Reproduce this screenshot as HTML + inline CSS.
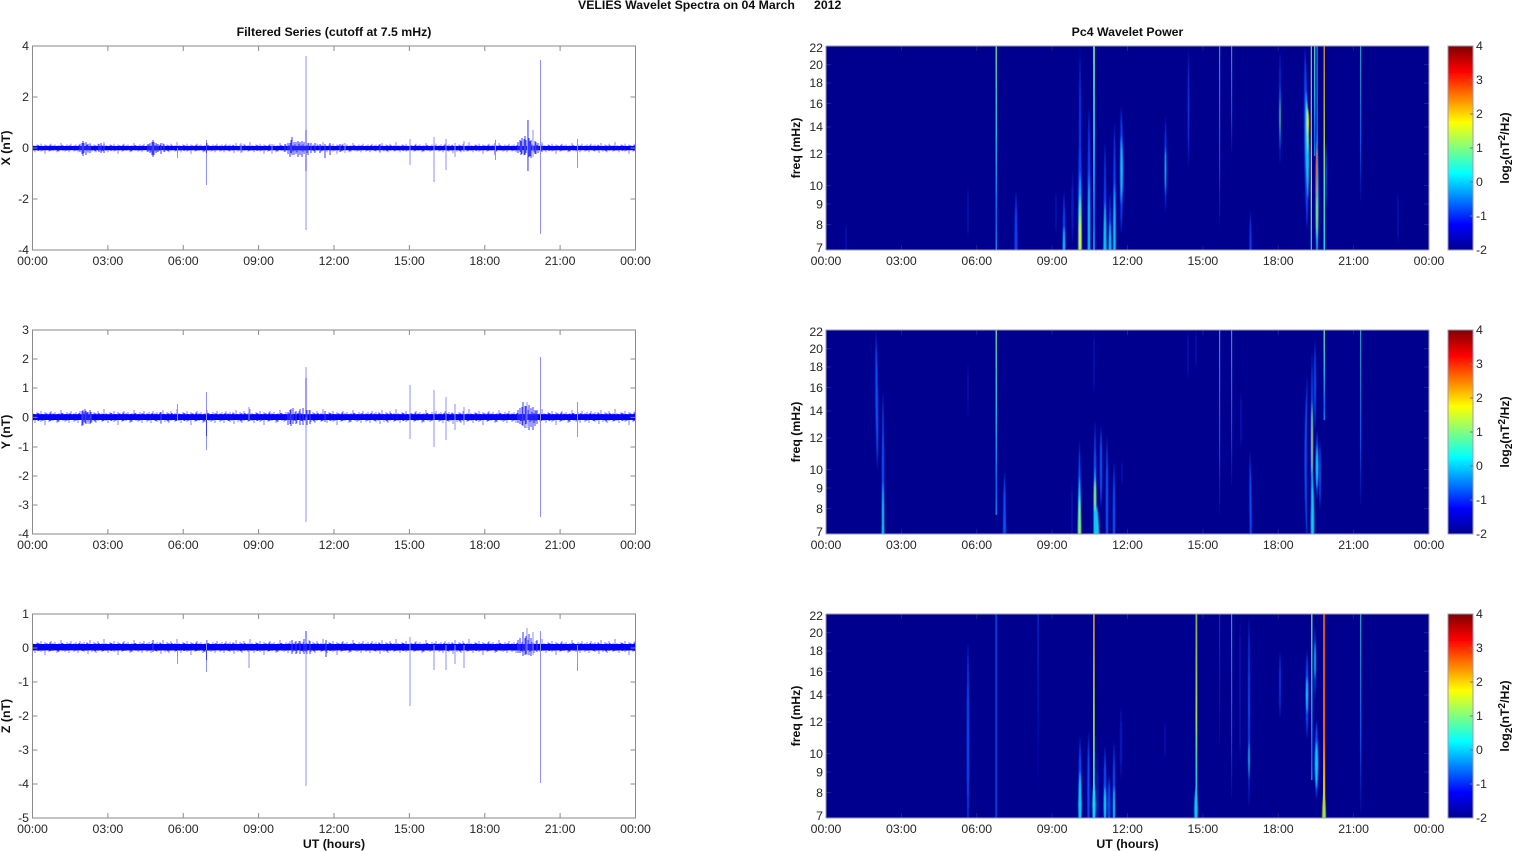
<!DOCTYPE html>
<html lang="en"><head><meta charset="utf-8"><title>VELIES Wavelet Spectra</title>
<style>
html,body{margin:0;padding:0;background:#fff;width:1515px;height:851px;overflow:hidden}
svg{display:block}
text{font-family:"Liberation Sans",sans-serif;font-size:12.3px;fill:#262626}
.b{font-weight:bold;fill:#111}
.m{text-anchor:middle}
.e{text-anchor:end}
</style></head><body>
<svg width="1515" height="851" viewBox="0 0 1515 851" xmlns="http://www.w3.org/2000/svg">
<defs>
<linearGradient id="jet" x1="0" y1="1" x2="0" y2="0">
<stop offset="0" stop-color="#00008f"/><stop offset=".125" stop-color="#0000ff"/><stop offset=".375" stop-color="#00ffff"/><stop offset=".625" stop-color="#ffff00"/><stop offset=".875" stop-color="#ff0000"/><stop offset="1" stop-color="#800000"/>
</linearGradient>
<linearGradient id="f1" x1="0" y1="0" x2="0" y2="1"><stop offset="0" stop-color="#5fc8a0"/><stop offset=".45" stop-color="#20b0e0"/><stop offset=".85" stop-color="#0a60f0"/><stop offset="1" stop-color="#1080f0"/></linearGradient>
<linearGradient id="f2" x1="0" y1="0" x2="0" y2="1"><stop offset="0" stop-color="#2b9bc0"/><stop offset=".6" stop-color="#0a50e0"/><stop offset="1" stop-color="#000090"/></linearGradient>
<linearGradient id="f3" x1="0" y1="0" x2="0" y2="1"><stop offset="0" stop-color="#0a30d0"/><stop offset="1" stop-color="#000090"/></linearGradient>
<linearGradient id="f4" x1="0" y1="0" x2="0" y2="1"><stop offset="0" stop-color="#c08040"/><stop offset=".5" stop-color="#a8d040"/><stop offset=".8" stop-color="#30e0c0"/><stop offset="1" stop-color="#10d0f0"/></linearGradient>
<linearGradient id="f5" x1="0" y1="0" x2="0" y2="1"><stop offset="0" stop-color="#d05030"/><stop offset=".6" stop-color="#f06010"/><stop offset=".85" stop-color="#f0c000"/><stop offset="1" stop-color="#80f060"/></linearGradient>
<linearGradient id="f6" x1="0" y1="0" x2="0" y2="1"><stop offset="0" stop-color="#90a060"/><stop offset=".5" stop-color="#a0e050"/><stop offset=".85" stop-color="#20c0e0"/><stop offset="1" stop-color="#10c0f0"/></linearGradient>
<linearGradient id="f7" x1="0" y1="0" x2="0" y2="1"><stop offset="0" stop-color="#60c8a8"/><stop offset=".4" stop-color="#d0a040"/><stop offset=".7" stop-color="#a0e050"/><stop offset="1" stop-color="#10c0e0"/></linearGradient>
<clipPath id="c1"><rect x="826" y="46" width="603" height="204"/></clipPath>
<clipPath id="c2"><rect x="826" y="330" width="603" height="204"/></clipPath>
<clipPath id="c3"><rect x="826" y="614" width="603" height="204"/></clipPath>
<filter id="s" x="-5%" y="-5%" width="110%" height="110%"><feGaussianBlur stdDeviation=".45"/></filter>
<filter id="t" x="-2%" y="-2%" width="104%" height="104%"><feGaussianBlur stdDeviation=".25"/></filter>
<pattern id="nz" patternUnits="userSpaceOnUse" x="0" y="-12" width="73" height="24">
<g transform="translate(0,12)" fill="none">
<path stroke="#8080ff" d="M1 -4V5M3 -5V4M5 -3V6M7 -6V3M9 -4V4M11 -5V5M13 -3V4M15 -4V7M17 -7V3M19 -3V5M21 -5V4M23 -4V6M25 -6V4M27 -3V3M29 -4V5M31 -8V4M33 -4V4M35 -3V6M37 -5V3M39 -4V4M41 -6V5M43 -3V4M45 -5V8M47 -4V3M49 -3V5M51 -6V4M53 -4V4M55 -5V3M57 -3V6M59 -4V5M61 -7V3M63 -4V4M65 -3V5M67 -5V4M69 -4V6M71 -6V3"/>
<path stroke="#2020ff" d="M2 -3V3.500M6 -4V3M10 -3V4M14 -4.500V3M18 -3V3M22 -3.500V4.500M26 -4V3M30 -3V4M34 -3V3M38 -4V4M42 -3V3.500M46 -3.500V3M50 -4.500V4M54 -3V3M58 -3V4.500M62 -4V3M66 -3V3.500M70 -3.500V3"/>
</g>
</pattern>
<path id="xt" d="M107.9 0v5M183.25 0v5M258.6 0v5M334 0v5M409.4 0v5M484.75 0v5M560.1 0v5M107.9 204v-5M183.25 204v-5M258.6 204v-5M334 204v-5M409.4 204v-5M484.75 204v-5M560.1 204v-5" fill="none" stroke="#8a8a8a"/>
<path id="xtr" d="M901.4 0v5M976.75 0v5M1052.1 0v5M1127.5 0v5M1202.9 0v5M1278.25 0v5M1353.6 0v5M901.4 204v-5M976.75 204v-5M1052.1 204v-5M1127.5 204v-5M1202.9 204v-5M1278.25 204v-5M1353.6 204v-5M826 18.6h5M826 37h5M826 57.5h5M826 81h5M826 108h5M826 139.5h5M826 158h5M826 178.5h5M1429 18.6h-5M1429 37h-5M1429 57.5h-5M1429 81h-5M1429 108h-5M1429 139.5h-5M1429 158h-5M1429 178.5h-5" fill="none" stroke="#20208f"/>
<path id="cbt" d="M1473 34h-3M1473 68h-3M1473 102h-3M1473 136h-3M1473 170h-3" fill="none" stroke="#777"/>
</defs>

<g filter="url(#t)">
<text class="b" x="578" y="9">VELIES Wavelet Spectra on 04 March</text>
<text class="b" x="814" y="9">2012</text>
<text class="b m" x="334" y="36">Filtered Series (cutoff at 7.5 mHz)</text>
<text class="b m" x="1127.5" y="36">Pc4 Wavelet Power</text>

<!-- LEFT 1 -->
<g transform="translate(0,148)"><rect x="33" y="-12" width="602" height="24" fill="url(#nz)" transform="scale(1,.72)"/><rect x="33" y="-2" width="602" height="4.2" fill="#0000ff"/></g>
<path d="M80 144V152M82 143V154M83 141V156M84 143V153M86 142V155M88 144V152M90 144V153M99 144V152M101 143V153M104 144V153M148 144V152M150 143V153M152 142V155M153 140V157M154 142V155M156 143V153M158 144V152M161 143V154M164 144V152M285 144V152M288 143V154M290 143V157M291 140V153M292 137V155M294 142V155M296 142V154M298 141V157M300 142V155M302 141V157M304 142V154M308 143V155M311 143V153M315 143V153M320 144V153M325 144V158M330 143V155M340 144V152M380 144V152M495 143V155M518 142V153M520 140V152M521 141V155M522 138V154M524 139V155M525 136V155M526 140V153M528 120V171M529 138V157M530 141V156M531 140V158M533 130V157M535 141V154M536 142V154M538 143V153M542 144V152" stroke="#3a3aff" fill="none"/>
<path d="M306 56V230M206.5 140V185M177.5 148V158M540.5 60V234M410 139V165M434 137V182M446 139V170M455 143V157M464 141V152M495.5 140V160M527.5 120V171M533 130V157M577.5 139V168M272 144V154M241 143V153M345 143V153" stroke="#8f8fff" fill="none"/>
<path d="M306 130V171M206.5 143V153" stroke="#3a3aff" fill="none"/>
<rect x="32.5" y="46" width="603" height="204" fill="none" stroke="#8a8a8a"/>
<use href="#xt" y="46"/>
<path d="M32.5 97h5M32.5 148h5M32.5 199h5M635.5 97h-5M635.5 148h-5M635.5 199h-5" stroke="#8a8a8a" fill="none"/>
<text class="e" x="29" y="50">4</text><text class="e" x="29" y="101">2</text><text class="e" x="29" y="152">0</text><text class="e" x="29" y="203">-2</text><text class="e" x="29" y="254">-4</text>
<text class="m" x="32.5" y="265">00:00</text><text class="m" x="107.9" y="265">03:00</text><text class="m" x="183.25" y="265">06:00</text><text class="m" x="258.6" y="265">09:00</text><text class="m" x="334" y="265">12:00</text><text class="m" x="409.4" y="265">15:00</text><text class="m" x="484.75" y="265">18:00</text><text class="m" x="560.1" y="265">21:00</text><text class="m" x="635.5" y="265">00:00</text>
<text class="b m" transform="translate(10,148) rotate(-90)">X (nT)</text>

<!-- LEFT 2 -->
<g transform="translate(0,417)"><rect x="33" y="-12" width="602" height="24" fill="url(#nz)"/><rect x="33" y="-2.8" width="602" height="5.8" fill="#0000ff"/></g>
<path d="M82 411V426M83 410V425M85 409V423M86 411V424M88 412V422M90 410V424M91 412V423M161 412V423M288 412V425M290 410V424M291 409V426M293 408V424M296 411V424M300 409V425M303 408V425M307 410V425M310 410V424M325 411V422M518 410V423M520 408V424M522 407V425M523 402V426M525 406V428M526 406V424M529 405V430M531 408V427M533 407V430M535 410V426M537 410V424" stroke="#3a3aff" fill="none"/>
<path d="M306 367V522M206.5 392V450M177.5 404V420M249 407V420M410 385V439M434 390V447M446 397V440M455 404V430M464 407V425M540.5 357V517M527 402V428M577.5 402V437" stroke="#8f8fff" fill="none"/>
<path d="M306 378V417M206.5 420V436" stroke="#3a3aff" fill="none"/>
<rect x="32.5" y="330" width="603" height="204" fill="none" stroke="#8a8a8a"/>
<use href="#xt" y="330"/>
<path d="M32.5 359h5M32.5 388h5M32.5 417.4h5M32.5 447h5M32.5 476h5M32.5 505h5M635.5 359h-5M635.5 388h-5M635.5 417.4h-5M635.5 447h-5M635.5 476h-5M635.5 505h-5" stroke="#8a8a8a" fill="none"/>
<text class="e" x="29" y="334">3</text><text class="e" x="29" y="363">2</text><text class="e" x="29" y="392">1</text><text class="e" x="29" y="421.5">0</text><text class="e" x="29" y="451">-1</text><text class="e" x="29" y="480">-2</text><text class="e" x="29" y="509">-3</text><text class="e" x="29" y="538">-4</text>
<text class="m" x="32.5" y="549">00:00</text><text class="m" x="107.9" y="549">03:00</text><text class="m" x="183.25" y="549">06:00</text><text class="m" x="258.6" y="549">09:00</text><text class="m" x="334" y="549">12:00</text><text class="m" x="409.4" y="549">15:00</text><text class="m" x="484.75" y="549">18:00</text><text class="m" x="560.1" y="549">21:00</text><text class="m" x="635.5" y="549">00:00</text>
<text class="b m" transform="translate(10,432) rotate(-90)">Y (nT)</text>

<!-- LEFT 3 -->
<g transform="translate(0,647)"><rect x="33" y="-12" width="602" height="24" fill="url(#nz)"/><rect x="33" y="-3" width="602" height="6.4" fill="#0000ff"/></g>
<path d="M153 640V652M292 640V654M296 641V654M300 641V654M304 639V654M310 641V654M326 640V657M518 640V653M520 638V653M523 632V656M525 638V655M526 636V654M529 634V655M531 638V656M533 637V654M537 640V652" stroke="#3a3aff" fill="none"/>
<path d="M306 631V786M206.5 640V672M177.5 650V664M249 650V668M410 637V706M434 645V670M446 645V670M455 645V664M464 645V668M540.5 631V783M577.5 645V671M527 628V655M533 632V655" stroke="#8f8fff" fill="none"/>
<path d="M306 631V652M206.5 650V660" stroke="#3a3aff" fill="none"/>
<rect x="32.5" y="614" width="603" height="204" fill="none" stroke="#8a8a8a"/>
<use href="#xt" y="614"/>
<path d="M32.5 648h5M32.5 682h5M32.5 716h5M32.5 750h5M32.5 784h5M635.5 648h-5M635.5 682h-5M635.5 716h-5M635.5 750h-5M635.5 784h-5" stroke="#8a8a8a" fill="none"/>
<text class="e" x="29" y="618">1</text><text class="e" x="29" y="652">0</text><text class="e" x="29" y="686">-1</text><text class="e" x="29" y="720">-2</text><text class="e" x="29" y="754">-3</text><text class="e" x="29" y="788">-4</text><text class="e" x="29" y="822">-5</text>
<text class="m" x="32.5" y="833">00:00</text><text class="m" x="107.9" y="833">03:00</text><text class="m" x="183.25" y="833">06:00</text><text class="m" x="258.6" y="833">09:00</text><text class="m" x="334" y="833">12:00</text><text class="m" x="409.4" y="833">15:00</text><text class="m" x="484.75" y="833">18:00</text><text class="m" x="560.1" y="833">21:00</text><text class="m" x="635.5" y="833">00:00</text>
<text class="b m" transform="translate(10,716) rotate(-90)">Z (nT)</text>
<text class="b m" x="334" y="848">UT (hours)</text>

<!-- RIGHT 1 -->
<rect x="826" y="46" width="603" height="204" fill="#00008f"/>
<g clip-path="url(#c1)"><g filter="url(#s)">
<g fill="#0a18b8">
<path d="M846 220q1.5 30 0 60q-1.500-30 0-60z"/><path d="M968 185q1.5 28 0 55q-1.500-27 0-55z"/><path d="M1056 190q1.5 22 0 45q-1.500-23 0-45z"/><path d="M1072.5 170q2.5 38 0 75q-2.500-37 0-75z"/><path d="M1398 190q1.5 28 0 55q-1.500-27 0-55z"/>
</g>
<g fill="#0a40f0">
<path d="M1080 46q2 100 0 204q-2-104 0-204z"/><path d="M1080 120q4 90 0 180q-4-90 0-180z"/><path d="M1089 105q3 100 0 195q-3-95 0-195z"/><path d="M1105 140q3 100 0 200q-3-100 0-200z"/><path d="M1110 190q3 60 0 120q-3-60 0-120z"/><path d="M1114.5 120q3 100 0 200q-3-100 0-200z"/><path d="M1121 105q5 65 0 130q-2-65 0-130z"/>
<path d="M1064 190q3 55 0 110q-3-55 0-110z"/><path d="M1016 190q3 50 0 100q-3-50 0-100z"/><path d="M1165.5 115q2 50 0 100q-2-50 0-100z"/><path d="M1188.5 46q1.5 62 0 124q-1.500-62 0-124z"/><path d="M1250.5 210q2 35 0 70q-2-35 0-70z"/><path d="M1280 46q1.5 62 0 124q-1.500-62 0-124z"/>
<path d="M1305 46q6 110 2 185q-5-90-2-185z"/><path d="M1326 140q2 35 0 70q-2-35 0-70z"/>
</g>
<g fill="#10c0f0">
<path d="M1080 170q3.5 75 0 150q-3.500-75 0-150z"/><path d="M1089 170q2.5 80 0 160q-2.500-80 0-160z"/><path d="M1105 200q3.5 55 0 110q-3.500-55 0-110z"/><path d="M1110 220q3 35 0 70q-3-35 0-70z"/><path d="M1114.5 180q2.5 65 0 130q-2.500-65 0-130z"/><path d="M1121 135q3.5 35 0 70q-1.500-35 0-70z"/><path d="M1165.5 145q1.5 25 0 50q-1.500-25 0-50z"/><path d="M1280 85q1.200 35 0 65q-1.200-30 0-65z"/><path d="M1306 90q5 50 2 110q-4-50-2-110z"/><path d="M1317 130q3 70 0 140q-3-70 0-140z"/><path d="M1064 225q2 20 0 40q-2-20 0-40z"/>
</g>
<g fill="#80f060"><path d="M1080 195q3 45 0 95q-3-50 0-95z"/><path d="M1307 100q3 25 1 55q-2.500-30-1-55z"/><path d="M1280 100q.8 18 0 35q-.8-17 0-35z"/><path d="M1317 190q2 25 0 50q-2-25 0-50z"/></g>
<g fill="#e8f020"><path d="M1080 215q2 25 0 55q-2-30 0-55z"/><path d="M1308 108q2 15 0 28q-1.500-13 0-28z"/></g>
<path d="M1316.5 140q1.500 32 0 65q-1.500-33 0-65z" fill="#f06a10"/>
</g></g>
<rect x="995.5" y="46" width="1.5" height="204" fill="url(#f1)"/>
<rect x="1093" y="46" width="2" height="204" fill="url(#f1)"/>
<rect x="1219" y="46" width="1.2" height="185" fill="url(#f2)"/>
<rect x="1231" y="46" width="1.2" height="110" fill="url(#f2)"/>
<rect x="1360" y="46" width="1.2" height="160" fill="url(#f2)"/>
<rect x="1310.7" y="46" width="1.3" height="204" fill="url(#f7)"/>
<rect x="1314" y="46" width="1.4" height="110" fill="url(#f1)"/>
<rect x="1316.5" y="46" width="1.2" height="100" fill="#1590e8"/>
<rect x="1323.5" y="46" width="1.5" height="204" fill="url(#f4)"/>
<use href="#xtr" y="46"/>
<rect x="826" y="46" width="603" height="204" fill="none" stroke="#9a9ab4"/>
<text class="e" x="823" y="52">22</text><text class="e" x="823" y="69">20</text><text class="e" x="823" y="87">18</text><text class="e" x="823" y="108">16</text><text class="e" x="823" y="131">14</text><text class="e" x="823" y="158">12</text><text class="e" x="823" y="190">10</text><text class="e" x="823" y="208.5">9</text><text class="e" x="823" y="229">8</text><text class="e" x="823" y="252">7</text>
<text class="m" x="826" y="265">00:00</text><text class="m" x="901.4" y="265">03:00</text><text class="m" x="976.75" y="265">06:00</text><text class="m" x="1052.1" y="265">09:00</text><text class="m" x="1127.5" y="265">12:00</text><text class="m" x="1202.9" y="265">15:00</text><text class="m" x="1278.25" y="265">18:00</text><text class="m" x="1353.6" y="265">21:00</text><text class="m" x="1429" y="265">00:00</text>
<text class="b m" transform="translate(800,148) rotate(-90)">freq (mHz)</text>
<rect x="1448" y="46" width="25" height="204" fill="url(#jet)" stroke="#9a9ab4"/>
<use href="#cbt" y="46"/>
<text x="1476" y="50">4</text><text x="1476" y="84">3</text><text x="1476" y="118">2</text><text x="1476" y="152">1</text><text x="1476" y="186">0</text><text x="1476" y="220">-1</text><text x="1476" y="254">-2</text>
<text class="b m" transform="translate(1509,148) rotate(-90)">log<tspan dy="3" style="font-size:10px">2</tspan><tspan dy="-3">(nT</tspan><tspan dy="-4" style="font-size:10px">2</tspan><tspan dy="4">/Hz)</tspan></text>

<!-- RIGHT 2 -->
<rect x="826" y="330" width="603" height="204" fill="#00008f"/>
<g clip-path="url(#c2)"><g filter="url(#s)">
<g fill="#0a18b8"><path d="M1094 330q1.500 35 0 65q-1.500-30 0-65z"/><path d="M1122 460q1.5 12 0 25q-1.500-13 0-25z"/><path d="M1196 330q1.5 20 0 40q-1.500-20 0-40z"/><path d="M1188 330q1.5 25 0 50q-1.500-25 0-50z"/><path d="M1241 390q1.5 30 0 60q-1.500-30 0-60z"/><path d="M1072 480q1.5 40 0 80q-1.500-40 0-80z"/><path d="M968 360q1 30 0 60q-1-30 0-60z"/></g>
<g fill="#0a50f0">
<path d="M876 330q3.500 80 1.500 140q-3.500-70-1.500-140z"/><path d="M883 390q2.5 100 0 190q-2.500-90 0-190z"/><path d="M1004.5 470q3 55 0 110q-3-55 0-110z"/><path d="M1079.5 440q3 70 0 140q-3-70 0-140z"/><path d="M1095 420q3 80 0 160q-3-80 0-160z"/><path d="M1101 425q2.5 43 0 85q-2.500-42 0-85z"/><path d="M1107 435q2.5 70 0 140q-2.500-70 0-140z"/><path d="M1114 460q2.5 60 0 120q-2.500-60 0-120z"/><path d="M1250 450q3 60 1 120q-2.500-60-1-120z"/><path d="M1307.5 375q-6 80 0 180q-1.500-90 0-180z"/><path d="M1312 350q2.500 100 0 210q-2.500-110 0-210z"/><path d="M1315 340q2 45 0 90q-2-45 0-90z"/><path d="M1317 430q3 35 0 70q-3-35 0-70z"/><path d="M1320 440q2 35 0 70q-2-35 0-70z"/>
</g>
<g fill="#10c8f0"><path d="M883 480q2.500 50 0 100q-2.500-50 0-100z"/><path d="M1079.5 475q3.500 50 0 100q-3.500-50 0-100z"/><path d="M1095 465q3 55 0 110q-3-55 0-110z"/><path d="M1097 505q4.500 35 0 65q-4.500-30 0-65z"/><path d="M1317 445q2.500 22 0 45q-2.500-23 0-45z"/><path d="M1312.5 470q3.500 50 0 100q-3.500-50 0-100z"/></g>
<g fill="#80f070"><path d="M1079.5 495q3 35 0 70q-3-35 0-70z"/><path d="M1095 478q2.500 18 0 35q-2.500-17 0-35z"/><path d="M1312 400q1.500 40 0 85q-1.500-45 0-85z"/></g>
<path d="M1312 420q1 30 0 55q-1-25 0-55z" fill="#c8d840"/>
</g></g>
<rect x="995.5" y="330" width="1.5" height="185" fill="url(#f1)"/>
<rect x="1219" y="330" width="1.2" height="190" fill="url(#f2)"/>
<rect x="1231" y="330" width="1.2" height="160" fill="url(#f2)"/>
<rect x="1323.5" y="330" width="1.5" height="90" fill="url(#f1)"/>
<rect x="1360" y="330" width="1.2" height="180" fill="url(#f2)"/>
<use href="#xtr" y="330"/>
<rect x="826" y="330" width="603" height="204" fill="none" stroke="#9a9ab4"/>
<text class="e" x="823" y="336">22</text><text class="e" x="823" y="353">20</text><text class="e" x="823" y="371">18</text><text class="e" x="823" y="392">16</text><text class="e" x="823" y="415">14</text><text class="e" x="823" y="442">12</text><text class="e" x="823" y="474">10</text><text class="e" x="823" y="492.5">9</text><text class="e" x="823" y="513">8</text><text class="e" x="823" y="536">7</text>
<text class="m" x="826" y="549">00:00</text><text class="m" x="901.4" y="549">03:00</text><text class="m" x="976.75" y="549">06:00</text><text class="m" x="1052.1" y="549">09:00</text><text class="m" x="1127.5" y="549">12:00</text><text class="m" x="1202.9" y="549">15:00</text><text class="m" x="1278.25" y="549">18:00</text><text class="m" x="1353.6" y="549">21:00</text><text class="m" x="1429" y="549">00:00</text>
<text class="b m" transform="translate(800,432) rotate(-90)">freq (mHz)</text>
<rect x="1448" y="330" width="25" height="204" fill="url(#jet)" stroke="#9a9ab4"/>
<use href="#cbt" y="330"/>
<text x="1476" y="334">4</text><text x="1476" y="368">3</text><text x="1476" y="402">2</text><text x="1476" y="436">1</text><text x="1476" y="470">0</text><text x="1476" y="504">-1</text><text x="1476" y="538">-2</text>
<text class="b m" transform="translate(1509,432) rotate(-90)">log<tspan dy="3" style="font-size:10px">2</tspan><tspan dy="-3">(nT</tspan><tspan dy="-4" style="font-size:10px">2</tspan><tspan dy="4">/Hz)</tspan></text>

<!-- RIGHT 3 -->
<rect x="826" y="614" width="603" height="204" fill="#00008f"/>
<g clip-path="url(#c3)"><g filter="url(#s)">
<g fill="#0a18b8"><path d="M1121 705q2.500 38 0 75q-2.500-37 0-75z"/><path d="M1097.5 750q2.500 50 0 100q-2.500-50 0-100z"/><path d="M1240 614q1.5 78 0 156q-1.500-78 0-156z"/><path d="M1165 720q1.5 20 0 40q-1.500-20 0-40z"/></g>
<g fill="#0a48f0"><path d="M968 640q2.500 100 0 200q-2.500-100 0-200z"/><path d="M1080 735q3 55 0 110q-3-55 0-110z"/><path d="M1088.5 730q2.500 60 0 120q-2.500-60 0-120z"/><path d="M1105 745q3 50 0 100q-3-50 0-100z"/><path d="M1109 775q3 30 0 60q-3-30 0-60z"/><path d="M1114 740q2.500 55 0 110q-2.500-55 0-110z"/><path d="M1249 614q2 98 0 196q-2-98 0-196z"/><path d="M1280 650q1.5 35 0 70q-1.500-35 0-70z"/><path d="M1307 650q3 45 0 90q-3-45 0-90z"/><path d="M1315 625q2 38 0 75q-2-37 0-75z"/><path d="M1316.5 720q4 40 0 80q-4-40 0-80z"/></g>
<g fill="#10c8f0"><path d="M1080 770q3.500 35 0 70q-3.500-35 0-70z"/><path d="M1105 785q2.500 22 0 43q-2.500-21 0-43z"/><path d="M1114 785q2 25 0 50q-2-25 0-50z"/><path d="M1307 675q2 20 0 40q-2-20 0-40z"/><path d="M1316.5 740q3 25 0 50q-3-25 0-50z"/><path d="M1315 640q1.500 20 0 40q-1.500-20 0-40z"/><path d="M1249 740q1.500 20 0 40q-1.500-20 0-40z"/><path d="M1094 780q3.500 25 0 50q-3.500-25 0-50z"/><path d="M1196 785q3.500 25 0 50q-3.500-25 0-50z"/></g>
<path d="M1324 790q3.500 25 0 50q-3.500-25 0-50z" fill="#d0e020"/>
</g></g>
<rect x="995.5" y="614" width="1.3" height="204" fill="#0a50f0"/>
<rect x="1037.5" y="614" width="1.2" height="186" fill="url(#f3)"/>
<rect x="1093" y="614" width="1.8" height="204" fill="url(#f4)"/>
<rect x="1195.5" y="614" width="1.8" height="204" fill="url(#f6)"/>
<rect x="1219" y="614" width="1.2" height="150" fill="url(#f3)"/>
<rect x="1231" y="614" width="1.2" height="190" fill="url(#f2)"/>
<rect x="1311" y="614" width="1.5" height="166" fill="url(#f1)"/>
<rect x="1323" y="614" width="2.2" height="204" fill="url(#f5)"/>
<rect x="1360" y="614" width="1.3" height="204" fill="url(#f2)"/>
<use href="#xtr" y="614"/>
<rect x="826" y="614" width="603" height="204" fill="none" stroke="#9a9ab4"/>
<text class="e" x="823" y="620">22</text><text class="e" x="823" y="637">20</text><text class="e" x="823" y="655">18</text><text class="e" x="823" y="676">16</text><text class="e" x="823" y="699">14</text><text class="e" x="823" y="726">12</text><text class="e" x="823" y="758">10</text><text class="e" x="823" y="776.5">9</text><text class="e" x="823" y="797">8</text><text class="e" x="823" y="820">7</text>
<text class="m" x="826" y="833">00:00</text><text class="m" x="901.4" y="833">03:00</text><text class="m" x="976.75" y="833">06:00</text><text class="m" x="1052.1" y="833">09:00</text><text class="m" x="1127.5" y="833">12:00</text><text class="m" x="1202.9" y="833">15:00</text><text class="m" x="1278.25" y="833">18:00</text><text class="m" x="1353.6" y="833">21:00</text><text class="m" x="1429" y="833">00:00</text>
<text class="b m" transform="translate(800,716) rotate(-90)">freq (mHz)</text>
<text class="b m" x="1127.5" y="848">UT (hours)</text>
<rect x="1448" y="614" width="25" height="204" fill="url(#jet)" stroke="#9a9ab4"/>
<use href="#cbt" y="614"/>
<text x="1476" y="618">4</text><text x="1476" y="652">3</text><text x="1476" y="686">2</text><text x="1476" y="720">1</text><text x="1476" y="754">0</text><text x="1476" y="788">-1</text><text x="1476" y="822">-2</text>
<text class="b m" transform="translate(1509,716) rotate(-90)">log<tspan dy="3" style="font-size:10px">2</tspan><tspan dy="-3">(nT</tspan><tspan dy="-4" style="font-size:10px">2</tspan><tspan dy="4">/Hz)</tspan></text>
</g>
</svg>
</body></html>
